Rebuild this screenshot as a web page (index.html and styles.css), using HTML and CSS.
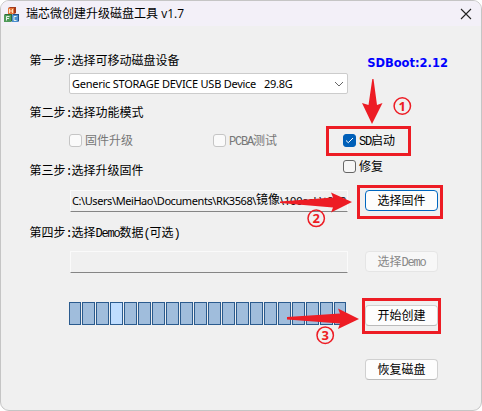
FILE: index.html
```html
<!DOCTYPE html>
<html lang="zh-CN">
<head>
<meta charset="utf-8">
<title>瑞芯微创建升级磁盘工具 v1.7</title>
<link rel="stylesheet" href="styles.css">
</head>
<body>
<main class="window">
  <header class="titlebar">
    <svg class="app-icon" width="16" height="16" viewBox="0 0 16 16">
      <path d="M4 2l2-1h6v6l-2 1H4z" fill="#a33a1c"/><path d="M4 2h6v6H4z" fill="#e8763a"/>
      <path d="M0 9l1-1h7v7l-1 1H0z" fill="#2f6a3a"/><path d="M0 9h7v7H0z" fill="#4f9a58"/>
      <path d="M8 9l1-1h6v7l-1 1H8z" fill="#1e4f8a"/><path d="M8 9h6v7H8z" fill="#4a8fd0"/>
      <path d="M5.500 3v4M8.500 3v4M5.500 5h3" stroke="#fbe3c0" fill="none"/>
      <path d="M2.500 14.500v-4h3M2.500 12.500h2.500M12.500 10.500h-2.500v4h2.500" stroke="#e2f2ea" fill="none"/>
    </svg>
    <h1 class="title">瑞芯微创建升级磁盘工具<span class="version"> v1.7</span></h1>
    <svg class="close" width="12" height="12" viewBox="0 0 12 12"><path d="M1 1l10 10M11 1L1 11" stroke="#222" stroke-width="1.1"/></svg>
  </header>

  <div class="row row-device-label">
    <span class="label">第一步<i>:</i>选择可移动磁盘设备</span>
    <strong class="sdboot">SDBoot:2.12</strong>
  </div>
  <div class="row row-device">
    <div class="select"><span class="select-text">Generic STORAGE DEVICE USB Device &nbsp; 29.8G</span>
      <svg width="10" height="6" viewBox="0 0 10 6"><path d="M1 1l4 4 4-4" fill="none" stroke="#666"/></svg>
    </div>
  </div>
  <div class="row row-mode-label"><span class="label">第二步<i>:</i>选择功能模式</span></div>
  <div class="row row-modes">
    <label class="check disabled"><span class="box"></span>固件升级</label>
    <label class="check disabled"><span class="box"></span><i>PCBA</i>测试</label>
    <label class="check"><span class="box checked"><svg width="9" height="7" viewBox="0 0 9 7"><path d="M1 3.500l2.300 2.200L8 1" fill="none" stroke="#fff"/></svg></span><i>SD</i>启动</label>
  </div>
  <div class="row row-firmware-label">
    <span class="label">第三步<i>:</i>选择升级固件</span>
    <label class="check repair"><span class="box"></span>修复</label>
  </div>
  <div class="row row-firmware">
    <div class="field"><span class="path">C:\Users\MeiHao\Documents\RK3568\</span><span class="path-cjk">镜像</span><span class="path path-tail">\100ask\tf\v3</span></div>
    <button class="button focused">选择固件</button>
  </div>
  <div class="row row-demo-label"><span class="label">第四步<i>:</i>选择<i>Demo</i>数据<i>(</i>可选<i>)</i></span></div>
  <div class="row row-demo">
    <div class="field"></div>
    <button class="button" disabled>选择<i>Demo</i></button>
  </div>
  <div class="row row-create">
    <div class="progress">
      <b></b><b></b><b></b><b class="light"></b><b></b><b></b><b></b><b></b><b></b><b></b><b></b><b></b><b></b><b></b><b></b><b></b><b></b><b></b><b></b><b></b>
    </div>
    <button class="button">开始创建</button>
  </div>
  <div class="row row-restore"><button class="button">恢复磁盘</button></div>

  <svg class="callouts" width="482" height="411" viewBox="0 0 482 411">
    <g fill="none" stroke="#ed1c24" stroke-width="3">
      <rect x="327.500" y="127.500" width="82" height="27"/>
      <rect x="358.500" y="186.500" width="83" height="31"/>
      <rect x="363.500" y="299.500" width="76" height="33"/>
    </g>
    <g fill="#ed1c24">
      <path d="M372.300 79h1.200L377 105l5.500-2L372 124l-10-21 6.500 2z"/>
      <path d="M280 201.500l53-4-2-5L352 202 331 212.500l2-5-53-4.500z"/>
      <path d="M287 317l53-3.500-2-5 21 10.500-21 10 2-5.500-53-4z"/>
    </g>
    <g fill="none" stroke="#ed1c24" stroke-width="1.500">
      <circle cx="402.300" cy="106" r="8.200"/><circle cx="316.200" cy="218.300" r="8.200"/><circle cx="325.200" cy="335.200" r="8.200"/>
    </g>
    <g class="number"><text x="402.300" y="110.700">1</text><text x="316.200" y="223">2</text><text x="325.200" y="340">3</text></g>
  </svg>
</main>
</body>
</html>
```
FILE: styles.css
```css
* { box-sizing: border-box; }
body { margin: 0; background: #fff; }
i { font-style: normal; letter-spacing: -1.2px; }

.window {
  position: relative;
  width: 482px;
  height: 411px;
  overflow: hidden;
  border: 1px solid #c5c5c5;
  border-radius: 9px;
  background: #f0f0f0;
  color: #000;
  font: 12px/16px "Liberation Mono", "Noto Sans CJK SC", monospace;
}

.titlebar {
  display: flex;
  align-items: center;
  height: 25px;
  padding: 0 9px 0 3px;
  background: #f3f0f8;
}
.app-icon { margin-right: 6px; }
.title {
  flex: 1;
  margin: 0;
  font: 12px/16px "Noto Sans CJK SC", sans-serif;
  white-space: pre;
}
.version { font-family: "Open Sans", sans-serif; }

.row { display: flex; padding-left: 68px; }
.label { line-height: 20px; white-space: nowrap; }
.row-device-label, .row-mode-label, .row-firmware-label, .row-demo-label { padding-left: 28.500px; }
.row-device-label { height: 47px; padding-top: 26px; }
.row-device { height: 31px; }
.row-mode-label { height: 29px; }
.row-modes { height: 29px; }
.row-firmware-label { height: 28px; }
.row-firmware { height: 34px; }
.row-demo-label { height: 27px; }
.row-demo { height: 51px; }
.row-create { height: 57px; }

.sdboot {
  margin-left: auto;
  padding: 3px 33px 0 0;
  color: #00f;
  font: bold 11.5px/16px "DejaVu Sans", sans-serif;
}
.select {
  display: flex;
  align-items: center;
  justify-content: space-between;
  width: 279px;
  height: 21px;
  padding: 0 3px 0 2px;
  border: 1px solid #ccc;
  border-radius: 2px;
  background: #fff;
}
.select-text, .path { font: 11px/16px "Noto Sans", sans-serif; white-space: pre; }
.select-text { padding-top: 1px; letter-spacing: -.25px; }
.path { letter-spacing: -.42px; }
.path-tail { letter-spacing: -.15px; }
.path-cjk { flex: none; line-height: 18px; white-space: nowrap; }

.check { display: flex; flex: none; align-items: flex-start; height: 16px; line-height: 18px; white-space: nowrap; }
.row-modes .check { width: 144px; }
.row-modes .check:nth-child(2) { width: 130px; }
.row-modes .check:nth-child(3) { width: 80px; }
.disabled { color: #777; }
.box {
  display: flex;
  align-items: center;
  justify-content: center;
  width: 13px;
  height: 13px;
  margin: 1px 3px 0 0;
  border: 1px solid #666;
  border-radius: 3px;
  background: #f6f6f6;
}
.disabled .box { border-color: #c5c5c5; background: #fafafa; }
.box.checked { border-color: #005fb8; background: #005fb8; }
.repair { margin: -3px 0 0 199.5px; }

.field {
  display: flex;
  align-items: center;
  width: 278px;
  height: 22px;
  margin-left: 1px;
  padding-left: 1px;
  overflow: hidden;
  border: 1px solid #fafafa;
  border-bottom-color: #858585;
  border-radius: 1px;
}
.button {
  width: 73px;
  height: 21px;
  margin-left: 17px;
  padding: 2px 0 0;
  border: 1px solid #d0d0d0;
  border-bottom-color: #bbb;
  border-radius: 4px;
  background: #fdfdfd;
  color: #000;
  font: inherit;
}
.button:disabled { border-color: #e5e5e5; background: #f7f7f7; color: #888; }
.button.focused { border-color: #0067c0; }

.progress { display: flex; gap: 1px; width: 277px; height: 23px; }
.progress b { flex: none; width: 13px; border: 1px solid #2b5b8e; background: #a0bddc; }
.progress b:first-child, .progress b:last-child { width: 12px; }
.progress .light { background: #bfddff; }
.row-create .button { margin: 3px 0 0 19px; }
.row-restore .button { margin-left: 296px; }

.callouts { position: absolute; left: -1px; top: -1px; }
.number { fill: #ed1c24; font: bold 13px "Noto Sans", sans-serif; text-anchor: middle; }
```
